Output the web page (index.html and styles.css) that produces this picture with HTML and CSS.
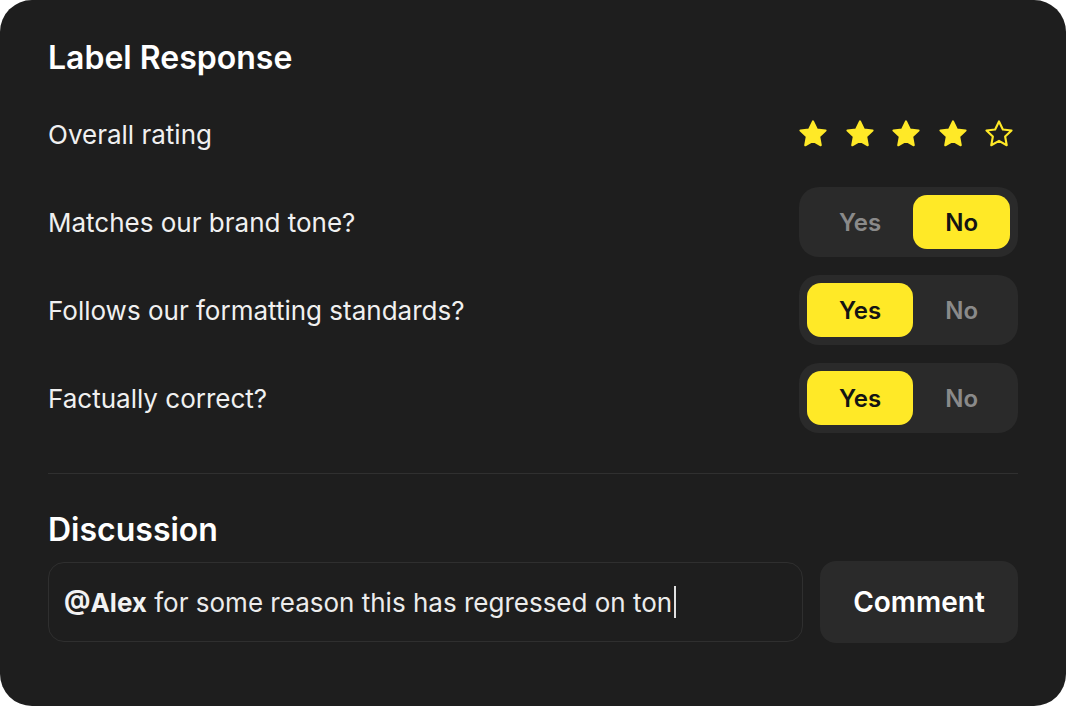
FILE: index.html
```html
<!DOCTYPE html>
<html>
<head>
<meta charset="utf-8">
<link rel="stylesheet" href="styles.css">
</head>
<body>
<div class="card">
  <h1 class="title">Label Response</h1>
  <div class="row rating-row">
    <span class="label">Overall rating</span>
    <div class="stars">
      <svg class="star" viewBox="0 0 24 24"><path class="fill" d="M12 2.6l2.9 6 6.5.8-4.8 4.5 1.2 6.5L12 17.2l-5.8 3.2 1.2-6.5L2.6 9.4l6.5-.8z"/></svg>
      <svg class="star" viewBox="0 0 24 24"><path class="fill" d="M12 2.6l2.9 6 6.5.8-4.8 4.5 1.2 6.5L12 17.2l-5.8 3.2 1.2-6.5L2.6 9.4l6.5-.8z"/></svg>
      <svg class="star" viewBox="0 0 24 24"><path class="fill" d="M12 2.6l2.9 6 6.5.8-4.8 4.5 1.2 6.5L12 17.2l-5.8 3.2 1.2-6.5L2.6 9.4l6.5-.8z"/></svg>
      <svg class="star" viewBox="0 0 24 24"><path class="fill" d="M12 2.6l2.9 6 6.5.8-4.8 4.5 1.2 6.5L12 17.2l-5.8 3.2 1.2-6.5L2.6 9.4l6.5-.8z"/></svg>
      <svg class="star" viewBox="0 0 24 24"><path class="outline" d="M12 2.6l2.9 6 6.5.8-4.8 4.5 1.2 6.5L12 17.2l-5.8 3.2 1.2-6.5L2.6 9.4l6.5-.8z"/></svg>
    </div>
  </div>
  <div class="row">
    <span class="label">Matches our brand tone?</span>
    <div class="toggle">
      <span class="opt">Yes</span>
      <span class="opt active">No</span>
    </div>
  </div>
  <div class="row">
    <span class="label">Follows our formatting standards?</span>
    <div class="toggle">
      <span class="opt active">Yes</span>
      <span class="opt">No</span>
    </div>
  </div>
  <div class="row">
    <span class="label">Factually correct?</span>
    <div class="toggle">
      <span class="opt active">Yes</span>
      <span class="opt">No</span>
    </div>
  </div>
  <hr class="divider">
  <h2 class="subtitle">Discussion</h2>
  <div class="compose">
    <div class="input"><b>@Alex</b> for some reason this has regressed on ton<span class="caret"></span></div>
    <button class="btn">Comment</button>
  </div>
</div>
</body>
</html>
```
FILE: styles.css
```css
* { box-sizing: border-box; }
html, body { margin: 0; padding: 0; background: #ffffff; }
body {
  font-family: Inter, "Noto Sans", sans-serif;
  width: 1066px;
  height: 706px;
  overflow: hidden;
}
.card {
  width: 1066px;
  height: 706px;
  background: #1e1e1e;
  border-radius: 32px;
  padding: 38px 48px 0 48px;
  color: #f2f2f2;
  display: flex;
  flex-direction: column;
}
.title {
  margin: 0;
  font-size: 32px;
  font-weight: 600;
  line-height: 40px;
  color: #ffffff;
}
.row {
  display: flex;
  align-items: center;
  justify-content: space-between;
  height: 70px;
  margin-top: 18px;
}
.rating-row {
  margin-top: 21px;
}
.label {
  font-size: 26px;
  font-weight: 400;
  color: #f0f0f0;
}
.stars {
  display: flex;
  gap: 14.5px;
  margin-right: 3px;
}
.star { width: 32px; height: 32px; display: block; }
.star .fill { fill: #ffe927; stroke: #ffe927; stroke-width: 1.6; stroke-linejoin: round; }
.star .outline { fill: none; stroke: #ffe927; stroke-width: 1.6; stroke-linejoin: round; }
.toggle {
  display: flex;
  height: 70px;
  padding: 8px;
  background: #2a2a2a;
  border-radius: 20px;
}
.opt {
  display: flex;
  align-items: center;
  justify-content: center;
  padding: 0 32px;
  font-size: 24px;
  font-weight: 600;
  color: #8a8a8a;
  border-radius: 14px;
}
.opt.active {
  background: #ffe927;
  color: #141414;
}
.divider {
  border: 0;
  height: 1px;
  background: #303030;
  margin: 40px 0 0 0;
}
.subtitle {
  margin: 36px 0 0 0;
  font-size: 32px;
  font-weight: 600;
  line-height: 40px;
  color: #ffffff;
}
.compose {
  display: flex;
  gap: 17px;
  margin-top: 11px;
  align-items: center;
}
.input {
  flex: 1;
  height: 80px;
  border: 1.5px solid #2f2f2f;
  border-radius: 16px;
  padding: 0 15px;
  display: flex;
  align-items: center;
  font-size: 26px;
  color: #ececec;
  white-space: pre;
}
.input b { font-weight: 700; color: #f2f2f2; }
.caret {
  display: inline-block;
  width: 1.5px;
  height: 32px;
  background: #e0e0e0;
  margin-left: 2px;
}
.btn {
  width: 198px;
  height: 82px;
  border: 0;
  border-radius: 16px;
  background: #2a2a2a;
  color: #ffffff;
  font-family: Inter, "Noto Sans", sans-serif;
  font-size: 28px;
  font-weight: 600;
}
```
